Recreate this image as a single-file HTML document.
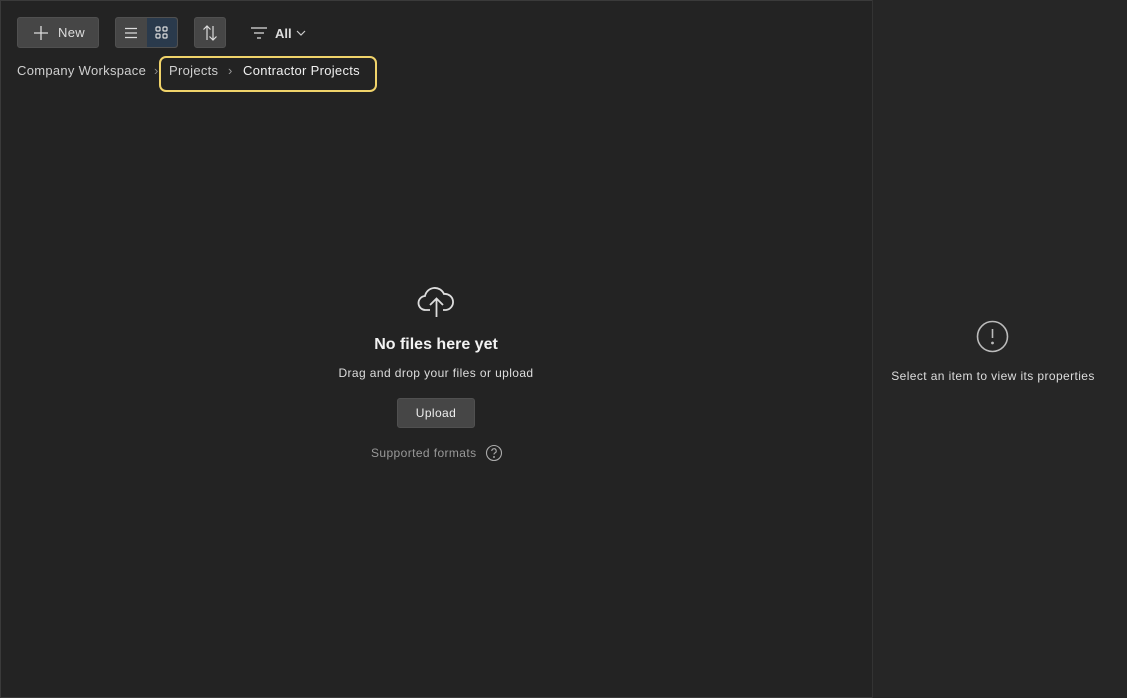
<!DOCTYPE html>
<html><head><style>
*{box-sizing:border-box;margin:0;padding:0}
body{width:1127px;height:698px;background:#232323;font-family:"Liberation Sans",sans-serif;color:#e6e6e6;position:relative;overflow:hidden}
.frame{position:absolute;inset:0;border:1px solid #3a3a3a}
.side{position:absolute;left:872px;top:0;width:255px;height:698px;background:#262626;border-left:1px solid #333}
.btn{position:absolute;background:#464646;border:1px solid #505050;border-radius:3px}
.t{position:absolute;white-space:nowrap}
.s12{font-size:12px;letter-spacing:0.4px}
.s13{font-size:13px;letter-spacing:0.3px}
</style></head><body>
<div class="frame"></div>
<div class="btn" style="left:17px;top:17px;width:82px;height:31px"></div>
<svg style="position:absolute;left:33px;top:25px" width="16" height="16"><path d="M8 1v14M1 8h14" stroke="#ddd" stroke-width="1.3"/></svg>
<div class="t s13" style="left:58px;top:25px;color:#ddd">New</div>
<div class="btn" style="left:115px;top:17px;width:63px;height:31px"></div>
<div style="position:absolute;left:147px;top:18px;width:30px;height:29px;background:#2a3a4c;border-radius:0 3px 3px 0"></div>
<svg style="position:absolute;left:124px;top:27px" width="14" height="12"><path d="M1 1.5h12M1 6h12M1 10.5h12" stroke="#ddd" stroke-width="1.2"/></svg>
<svg style="position:absolute;left:155px;top:26px" width="14" height="14" fill="none" stroke="#ddd" stroke-width="1.2"><rect x="1" y="1" width="4" height="4" rx="1"/><rect x="8" y="1" width="4" height="4" rx="1"/><rect x="1" y="8" width="4" height="4" rx="1"/><rect x="8" y="8" width="4" height="4" rx="1"/></svg>
<div class="btn" style="left:194px;top:17px;width:32px;height:31px"></div>
<svg style="position:absolute;left:202px;top:25px" width="16" height="16" fill="none" stroke="#ddd" stroke-width="1.2"><path d="M5 15V1M1.5 4.5L5 1l3.5 3.5M11 1v14M7.5 11.5L11 15l3.5-3.5"/></svg>
<svg style="position:absolute;left:250px;top:26px" width="18" height="14" stroke="#ddd" stroke-width="1.2"><path d="M1 2h16M4 7h10M7 12h4"/></svg>
<div class="t" style="left:275px;top:26px;font-size:13px;font-weight:bold;color:#ddd">All</div>
<svg style="position:absolute;left:296px;top:29px" width="10" height="8" fill="none" stroke="#ccc" stroke-width="1.2"><path d="M1 2l4 4 4-4"/></svg>
<div class="t s13" style="left:17px;top:63px;color:#cfcfcf">Company Workspace</div>
<div class="t" style="left:154px;top:63px;font-size:13px;color:#888">›</div>
<div style="position:absolute;left:159px;top:56px;width:218px;height:36px;border:2px solid #f0d36a;border-radius:7px"></div>
<div class="t s13" style="left:169px;top:63px;color:#cfcfcf">Projects</div>
<div class="t" style="left:228px;top:63px;font-size:13px;color:#999">›</div>
<div class="t s13" style="left:243px;top:63px;color:#f0f0f0">Contractor Projects</div>
<svg style="position:absolute;left:417px;top:284px" width="40" height="34" fill="none" stroke="#ddd" stroke-width="1.8"><path d="M13 26H9a7 7 0 0 1-1-14 10 10 0 0 1 19-2 7.5 7.5 0 0 1 2 16h-3"/><path d="M19.5 33V15M13 21l6.5-6.5L26 21"/></svg>
<div class="t" style="left:0;width:872px;text-align:center;top:336px;font-size:16px;font-weight:bold;color:#f2f2f2">No files here yet</div>
<div class="t s12" style="left:0;width:872px;text-align:center;top:366px;color:#ddd">Drag and drop your files or upload</div>
<div class="btn" style="left:397px;top:398px;width:78px;height:30px"></div>
<div class="t s12" style="left:397px;width:78px;text-align:center;top:406px;color:#eee">Upload</div>
<div class="t s12" style="left:371px;top:446px;color:#999">Supported formats</div>
<svg style="position:absolute;left:485px;top:444px" width="18" height="18" fill="none" stroke="#aaa" stroke-width="1.1"><circle cx="9" cy="9" r="7.5"/><path d="M6.8 7a2.2 2.2 0 1 1 3 2c-.6.3-.8.7-.8 1.5"/><circle cx="9" cy="13" r=".4" fill="#aaa"/></svg>
<div class="side"></div>
<svg style="position:absolute;left:976px;top:320px" width="33" height="33" fill="none" stroke="#bbb" stroke-width="1.6"><circle cx="16.5" cy="16.5" r="15"/><path d="M16.5 9v9"/><circle cx="16.5" cy="23" r=".6" fill="#bbb"/></svg>
<div class="t s12" style="left:873px;width:240px;text-align:center;top:369px;color:#ddd">Select an item to view its properties</div>
</body></html>
